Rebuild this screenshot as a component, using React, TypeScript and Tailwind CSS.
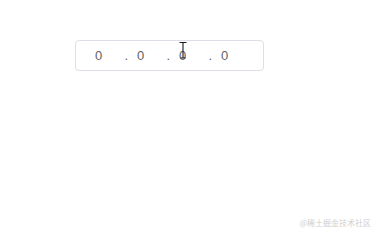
import React from 'react';

const parts = ['0', '0', '0', '0'];

function IBeam() {
  return (
    <svg
      className="absolute left-[179px] top-[41px]"
      width="8"
      height="19"
      viewBox="0 0 8 19"
      fill="none"
      stroke="#1a1a1a"
      strokeWidth={1.1}
    >
      <path d="M0.5 1.5h7M4 1.5v15.5M1.5 17h5" />
    </svg>
  );
}

export default function App() {
  return (
    <div className="relative w-[380px] h-[235px] bg-white font-['Liberation_Sans','Noto_Sans',sans-serif]">
      <div className="pt-[40px] pl-[75px]">
        <div className="flex items-center w-[189px] h-[31px] border border-[#dcdfe6] rounded-[4px] pl-[19px] text-[13px] text-[#606266]">
          {parts.map((p, i) => (
            <div key={i} className="flex items-center w-[42.3px]">
              <span className="w-[29.5px]">{p}</span>
              {i < 3 && <span>.</span>}
            </div>
          ))}
        </div>
      </div>
      <IBeam />
      <div className="absolute right-[9px] bottom-[8px] text-[8px] leading-none text-[#cfcfcf] font-['Noto_Sans_CJK_SC',sans-serif]">
        @稀土掘金技术社区
      </div>
    </div>
  );
}
